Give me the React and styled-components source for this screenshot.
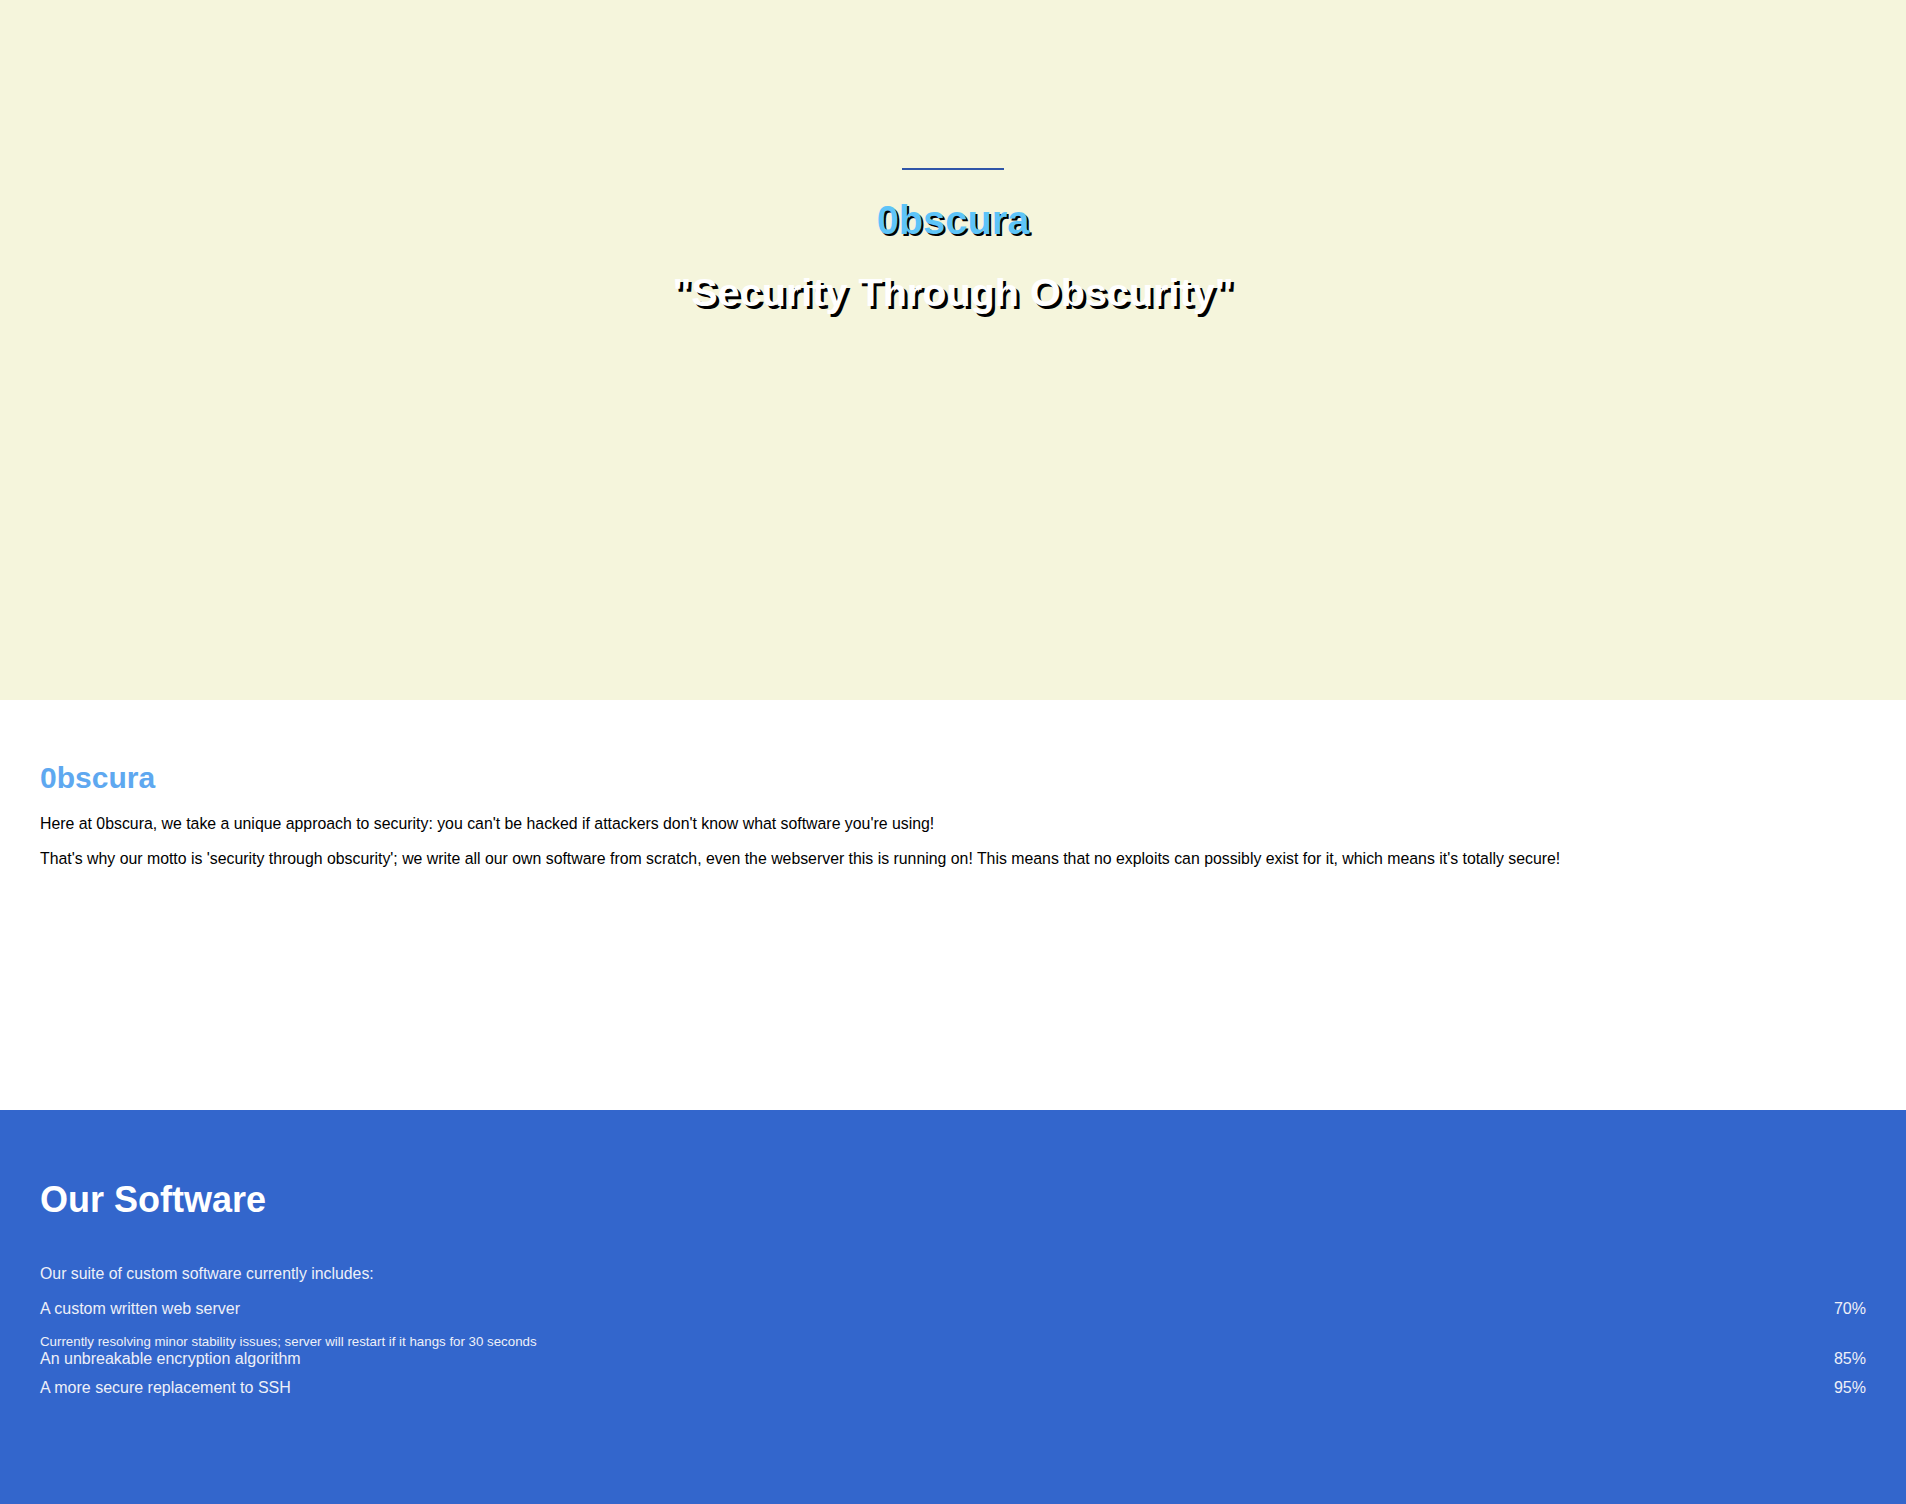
import styled, { createGlobalStyle } from 'styled-components';

const GlobalStyle = createGlobalStyle`
  html, body {
    margin: 0;
    padding: 0;
    background: #ffffff;
    font-family: "Liberation Sans", Arial, sans-serif;
  }
`;

// Bandeau d'accueil
const Hero = styled.header`
  background-color: #f5f5dc;
  height: 700px;
  display: flex;
  flex-direction: column;
  align-items: center;
  padding-top: 168px;
  box-sizing: border-box;
`;

const Rule = styled.div`
  width: 102px;
  height: 2px;
  background-color: #2f55a8;
`;

const HeroTitle = styled.h1`
  margin: 28px 0 0;
  font-size: 39.8px;
  font-weight: bold;
  color: #5ec4f8;
  text-shadow: 2px 2px 0 #000;
`;

const Tagline = styled.h2`
  margin: 27px 0 0;
  font-size: 39.6px;
  font-weight: bold;
  color: #ffffff;
  text-shadow: 3px 3px 0 #000;
`;

// Sections
const Section = styled.section`
  background-color: ${(p) => p.$bg};
  color: ${(p) => p.$color};
  padding: ${(p) => p.$top}px 40px 0;
  height: ${(p) => p.$height}px;
  box-sizing: border-box;
`;

const SectionTitle = styled.h2`
  margin: 0;
  padding-bottom: ${(p) => p.$gap || 0}px;
  font-size: ${(p) => p.$size}px;
  font-weight: bold;
  color: ${(p) => p.$color};
`;

const Text = styled.p`
  margin: 17px 0 0;
  font-size: 15.85px;
  line-height: 18px;
`;

const Intro = styled(Text)`
  margin-top: 44px;
`;

const List = styled.div`
  margin-top: 17px;
  display: flex;
  flex-direction: column;
`;

const Item = styled.div`
  padding-bottom: ${(p) => (p.$hasNote ? 0 : 11)}px;
`;

const Row = styled.div`
  display: flex;
  justify-content: space-between;
  font-size: 16px;
  line-height: 18px;
`;

const Note = styled.div`
  margin-top: 15px;
  font-size: 13.3px;
  line-height: 17px;
`;

const software = [
  {
    name: 'A custom written web server',
    pct: '70%',
    note: 'Currently resolving minor stability issues; server will restart if it hangs for 30 seconds',
  },
  { name: 'An unbreakable encryption algorithm', pct: '85%' },
  { name: 'A more secure replacement to SSH', pct: '95%' },
];

const App = () => {
  return (
    <>
      <GlobalStyle />
      <Hero>
        <Rule />
        <HeroTitle>0bscura</HeroTitle>
        <Tagline>"Security Through Obscurity"</Tagline>
      </Hero>

      <Section $bg="#ffffff" $color="#000000" $top={61} $height={410}>
        <SectionTitle $size={30} $color="#5ea8f0" $gap={3}>0bscura</SectionTitle>
        <Text>
          Here at 0bscura, we take a unique approach to security: you can't be hacked if attackers don't know what software you're using!
        </Text>
        <Text>
          That's why our motto is 'security through obscurity'; we write all our own software from scratch, even the webserver this is running on! This means that no exploits can possibly exist for it, which means it's totally secure!
        </Text>
      </Section>

      <Section $bg="#3366cc" $color="#eef0f8" $top={69} $height={394}>
        <SectionTitle $size={36} $color="#ffffff">Our Software</SectionTitle>
        <Intro>Our suite of custom software currently includes:</Intro>
        <List>
          {software.map((s) => (
            <Item key={s.name} $hasNote={!!s.note}>
              <Row>
                <span>{s.name}</span>
                <span>{s.pct}</span>
              </Row>
              {s.note && <Note>{s.note}</Note>}
            </Item>
          ))}
        </List>
      </Section>
    </>
  );
};

export default App;
